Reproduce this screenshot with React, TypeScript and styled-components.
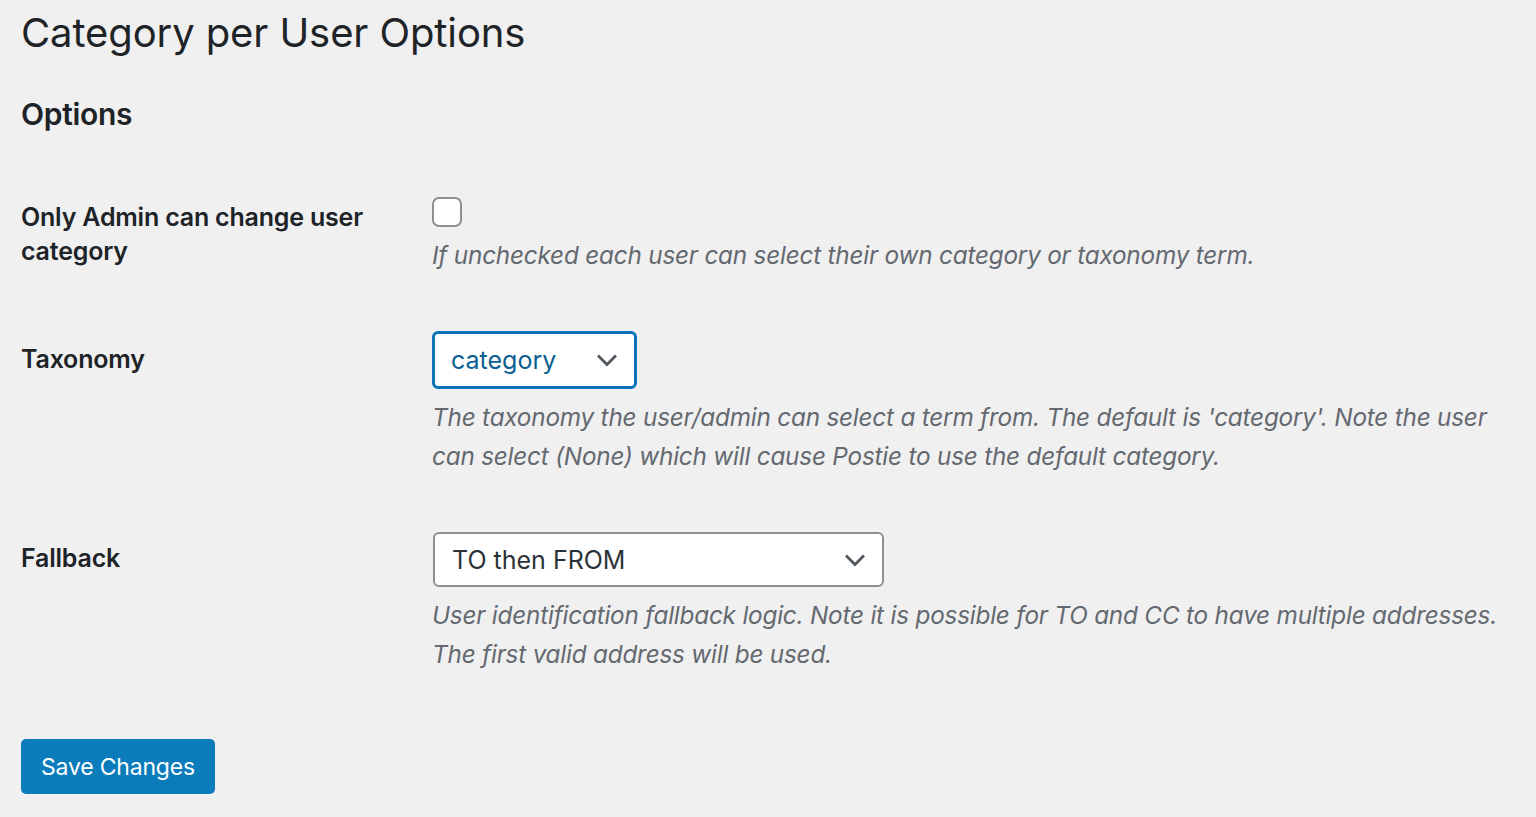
import React from 'react'
import styled, { createGlobalStyle } from 'styled-components'

const GlobalStyle = createGlobalStyle`
  html, body {
    margin: 0;
    padding: 0;
    background: #f0f0f1;
    font-family: Inter, "Noto Sans", "Liberation Sans", sans-serif;
    color: #1d2327;
  }
`

const Page = styled.div`
  padding: 4px 21px 0 21px;
  min-height: 817px;
  box-sizing: border-box;
`

const Title = styled.h1`
  margin: 0;
  font-size: 40px;
  font-weight: 400;
  line-height: 57px;
  color: #1d2327;
  letter-spacing: -0.1px;
`

const SectionTitle = styled.h2`
  margin: 33px 0 0;
  font-size: 30px;
  font-weight: 600;
  line-height: 40px;
  letter-spacing: -0.3px;
`

const FormTable = styled.div`
  display: flex;
  flex-direction: column;
  gap: 56px;
  margin-top: 63px;
`

const Row = styled.div`
  display: grid;
  grid-template-columns: 411px 1fr;
`

const Label = styled.div<{ $offset: number }>`
  padding-top: ${(p) => p.$offset}px;
  font-size: 25px;
  font-weight: 600;
  line-height: 34px;
  color: #1d2327;
  letter-spacing: -0.2px;
  padding-right: 40px;
`

const Field = styled.div`
  display: flex;
  flex-direction: column;
  align-items: flex-start;
`

const Checkbox = styled.span`
  display: block;
  width: 30px;
  height: 30px;
  box-sizing: border-box;
  border: 2px solid #8c8f94;
  border-radius: 7px;
  background: #fff;
`

const Description = styled.p<{ $gap: number }>`
  margin: ${(p) => p.$gap}px 0 0;
  font-size: 24.3px;
  font-style: italic;
  line-height: 39px;
  color: #646970;
  letter-spacing: -0.2px;
`

const SelectBox = styled.div<{ $width: number; $focused?: boolean }>`
  width: ${(p) => p.$width}px;
  height: ${(p) => (p.$focused ? 58 : 55)}px;
  box-sizing: border-box;
  display: flex;
  align-items: center;
  justify-content: space-between;
  padding: 0 16px 0 ${(p) => (p.$focused ? 16 : 17)}px;
  background: #fff;
  border: ${(p) => (p.$focused ? '3px solid #0a74b8' : '2px solid #8c8f94')};
  border-radius: 6px;
  font-size: 25px;
  color: ${(p) => (p.$focused ? '#0a5f92' : '#2c3338')};
  margin-left: ${(p) => (p.$focused ? 0 : 1)}px;
`

const Chevron = () => (
  <svg width="22" height="14" viewBox="0 0 22 14" fill="none">
    <path d="M2 2.5l9 9 9-9" stroke="#50575e" strokeWidth="2.8" />
  </svg>
)

const SaveButton = styled.button`
  margin-top: 65px;
  height: 55px;
  padding: 0 20px;
  border: none;
  border-radius: 5px;
  background: #0a7cbb;
  color: #fff;
  font-family: inherit;
  font-size: 23px;
  letter-spacing: -0.2px;
  cursor: pointer;
`

export default function App() {
  return (
    <Page>
      <GlobalStyle />
      <Title>Category per User Options</Title>
      <SectionTitle>Options</SectionTitle>
      <FormTable>
        <Row>
          <Label $offset={3}>Only Admin can change user category</Label>
          <Field>
            <Checkbox />
            <Description $gap={9}>
              If unchecked each user can select their own category or taxonomy term.
            </Description>
          </Field>
        </Row>
        <Row>
          <Label $offset={11}>Taxonomy</Label>
          <Field>
            <SelectBox $width={205} $focused>
              <span>category</span>
              <Chevron />
            </SelectBox>
            <Description $gap={9}>
              The taxonomy the user/admin can select a term from. The default is 'category'. Note the user
              <br />
              can select (None) which will cause Postie to use the default category.
            </Description>
          </Field>
        </Row>
        <Row>
          <Label $offset={9}>Fallback</Label>
          <Field>
            <SelectBox $width={451}>
              <span>TO then FROM</span>
              <Chevron />
            </SelectBox>
            <Description $gap={9}>
              User identification fallback logic. Note it is possible for TO and CC to have multiple addresses.
              <br />
              The first valid address will be used.
            </Description>
          </Field>
        </Row>
      </FormTable>
      <SaveButton>Save Changes</SaveButton>
    </Page>
  )
}
